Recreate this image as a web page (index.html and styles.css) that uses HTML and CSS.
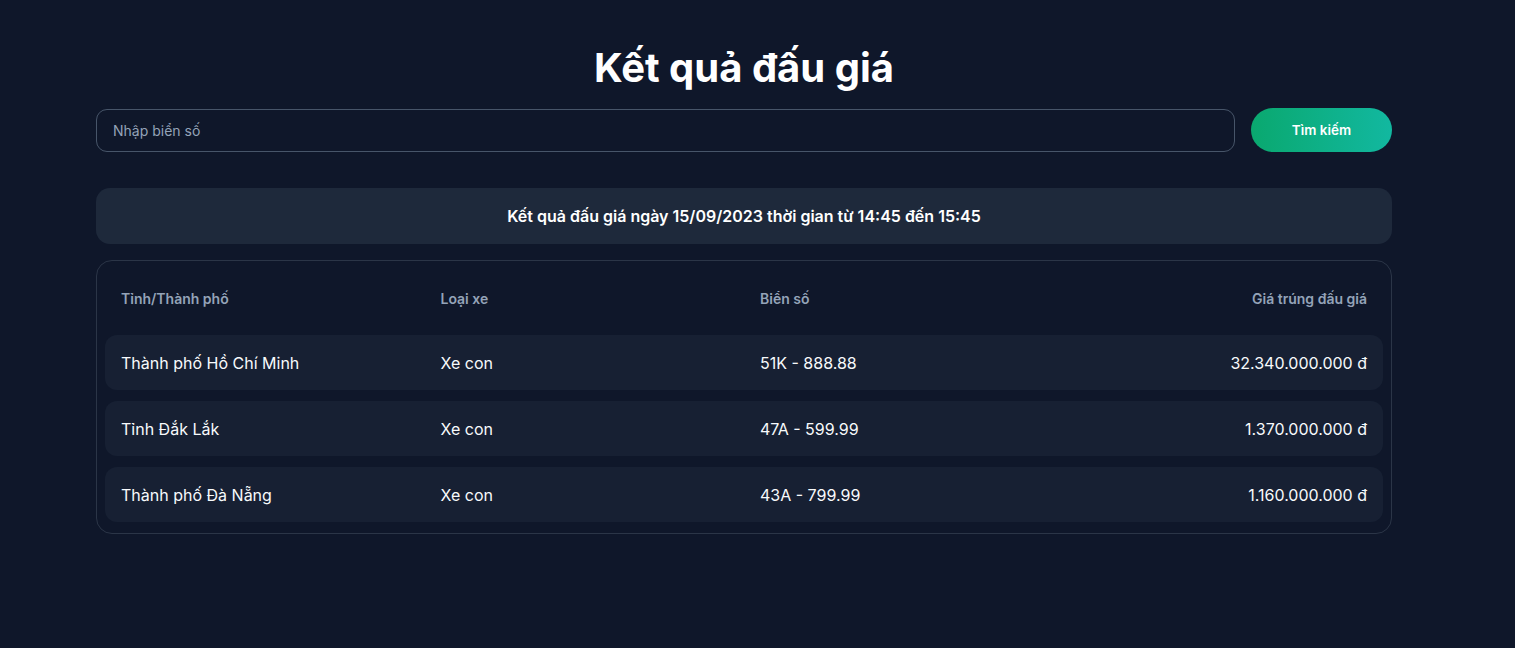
FILE: index.html
```html
<!DOCTYPE html>
<html lang="vi">
<head>
<meta charset="utf-8">
<title>Kết quả đấu giá</title>
<link rel="stylesheet" href="styles.css">
</head>
<body>
<main class="page">
  <h1 class="title">Kết quả đấu giá</h1>
  <form class="search">
    <input class="search-input" type="text" placeholder="Nhập biển số">
    <button class="search-btn" type="button">Tìm kiếm</button>
  </form>
  <div class="banner">Kết quả đấu giá ngày 15/09/2023 thời gian từ 14:45 đến 15:45</div>
  <section class="results">
    <div class="row head">
      <div class="cell">Tỉnh/Thành phố</div>
      <div class="cell">Loại xe</div>
      <div class="cell">Biển số</div>
      <div class="cell right">Giá trúng đấu giá</div>
    </div>
    <div class="row item">
      <div class="cell">Thành phố Hồ Chí Minh</div>
      <div class="cell">Xe con</div>
      <div class="cell">51K - 888.88</div>
      <div class="cell right">32.340.000.000 đ</div>
    </div>
    <div class="row item">
      <div class="cell">Tỉnh Đắk Lắk</div>
      <div class="cell">Xe con</div>
      <div class="cell">47A - 599.99</div>
      <div class="cell right">1.370.000.000 đ</div>
    </div>
    <div class="row item">
      <div class="cell">Thành phố Đà Nẵng</div>
      <div class="cell">Xe con</div>
      <div class="cell">43A - 799.99</div>
      <div class="cell right">1.160.000.000 đ</div>
    </div>
  </section>
</main>
</body>
</html>
```

FILE: styles.css
```css
* { box-sizing: border-box; }
html, body {
  margin: 0;
  height: 100%;
  background: #0f172a;
}
body {
  font-family: Inter, "Noto Sans", "DejaVu Sans", sans-serif;
  color: #f1f5f9;
}
.page {
  width: 1296px;
  margin-left: 96px;
  padding-top: 48px;
}
.title {
  margin: 0 0 20px;
  font-size: 40px;
  line-height: 40px;
  font-weight: 700;
  text-align: center;
  color: #ffffff;
}
.search {
  display: flex;
  align-items: center;
  gap: 16px;
  height: 44px;
  margin: 0 0 36px;
}
.search-input {
  flex: 1;
  height: 43px;
  border: 1px solid #475569;
  border-radius: 11px;
  background: transparent;
  padding: 0 16px;
  font-family: inherit;
  font-size: 14px;
  color: #e2e8f0;
  outline: none;
}
.search-input::placeholder { color: #94a3b8; }
.search-btn {
  width: 141px;
  height: 44px;
  border: 0;
  border-radius: 22px;
  background: linear-gradient(90deg, #0aa86f 0%, #12b8a0 100%);
  color: #ffffff;
  font-family: inherit;
  font-size: 13.5px;
  font-weight: 600;
}
.banner {
  height: 56px;
  display: flex;
  align-items: center;
  justify-content: center;
  background: #1e293b;
  border-radius: 14px;
  font-size: 16px;
  font-weight: 600;
  color: #ffffff;
  margin-bottom: 16px;
}
.results {
  border: 1px solid #2b3547;
  border-radius: 16px;
  padding: 0 8px 11px;
  display: flex;
  flex-direction: column;
  gap: 11px;
}
.row {
  display: grid;
  grid-template-columns: repeat(4, 1fr);
  align-items: center;
}
.cell { padding: 0 16px; }
.head {
  height: 74px;
  margin-bottom: -11px;
  font-size: 14px;
  font-weight: 600;
  color: #94a3b8;
}
.item {
  height: 55px;
  background: #172033;
  border-radius: 12px;
  font-size: 16px;
  color: #f8fafc;
}
.right { text-align: right; }
```
